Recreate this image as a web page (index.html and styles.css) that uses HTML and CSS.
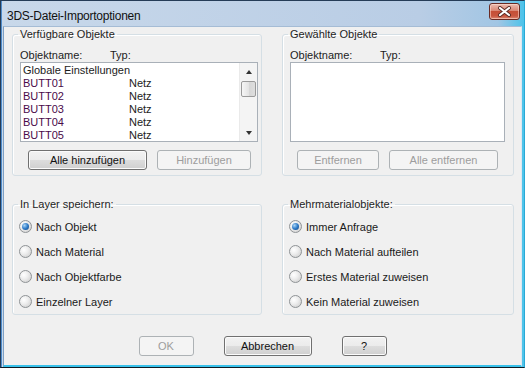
FILE: index.html
```html
<!DOCTYPE html>
<html lang="de">
<head>
    <meta charset="UTF-8">
    <title>3DS-Datei-Importoptionen</title>
    <link rel="stylesheet" href="styles.css">
</head>
<body>
    <div class="window">
        <div class="titlebar">
            <span class="title">3DS-Datei-Importoptionen</span>
            <button class="close" aria-label="Schließen">
                <svg width="15" height="11" viewBox="0 0 15 11">
                    <path d="M3 2 L12 9 M12 2 L3 9" stroke="#5a2a24" stroke-width="4" stroke-linecap="round"/>
                    <path d="M3 2 L12 9 M12 2 L3 9" stroke="#ffffff" stroke-width="2.2" stroke-linecap="round"/>
                </svg>
            </button>
        </div>

        <div class="client">
            <div class="groups">
                <!-- available objects -->
                <fieldset class="group group-left">
                    <legend>Verfügbare Objekte</legend>
                    <div class="cols">
                        <span class="col-name">Objektname:</span>
                        <span>Typ:</span>
                    </div>
                    <div class="listbox list-left">
                        <ul class="items">
                            <li><span class="name">Globale Einstellungen</span></li>
                            <li><span class="name obj">BUTT01</span><span>Netz</span></li>
                            <li><span class="name obj">BUTT02</span><span>Netz</span></li>
                            <li><span class="name obj">BUTT03</span><span>Netz</span></li>
                            <li><span class="name obj">BUTT04</span><span>Netz</span></li>
                            <li><span class="name obj">BUTT05</span><span>Netz</span></li>
                        </ul>
                        <div class="scrollbar">
                            <span class="arrow"><span class="tri up"></span></span>
                            <span class="thumb"></span>
                            <span class="track"></span>
                            <span class="arrow"><span class="tri down"></span></span>
                        </div>
                    </div>
                    <div class="actions">
                        <button class="btn btn-add-all">Alle hinzufügen</button>
                        <button class="btn btn-add" disabled>Hinzufügen</button>
                    </div>
                </fieldset>

                <!-- chosen objects -->
                <fieldset class="group group-right">
                    <legend>Gewählte Objekte</legend>
                    <div class="cols">
                        <span class="col-name">Objektname:</span>
                        <span>Typ:</span>
                    </div>
                    <div class="listbox list-right"></div>
                    <div class="actions">
                        <button class="btn btn-remove" disabled>Entfernen</button>
                        <button class="btn btn-remove-all" disabled>Alle entfernen</button>
                    </div>
                </fieldset>

                <fieldset class="group radios">
                    <legend>In Layer speichern:</legend>
                    <label class="radio-row"><span class="radio checked"></span>Nach Objekt</label>
                    <label class="radio-row"><span class="radio"></span>Nach Material</label>
                    <label class="radio-row"><span class="radio"></span>Nach Objektfarbe</label>
                    <label class="radio-row"><span class="radio"></span>Einzelner Layer</label>
                </fieldset>

                <fieldset class="group radios">
                    <legend>Mehrmaterialobjekte:</legend>
                    <label class="radio-row"><span class="radio checked"></span>Immer Anfrage</label>
                    <label class="radio-row"><span class="radio"></span>Nach Material aufteilen</label>
                    <label class="radio-row"><span class="radio"></span>Erstes Material zuweisen</label>
                    <label class="radio-row"><span class="radio"></span>Kein Material zuweisen</label>
                </fieldset>
            </div>

            <div class="footer">
                <button class="btn btn-ok" disabled>OK</button>
                <button class="btn btn-cancel">Abbrechen</button>
                <button class="btn btn-help">?</button>
            </div>
        </div>
    </div>
</body>
</html>
```

FILE: styles.css
```css
body {
    margin: 0;
    font-family: "Liberation Sans", Arial, sans-serif;
    font-size: 11px;
    color: #1c1c1c;
}
.window {
    width: 525px;
    height: 368px;
    box-sizing: border-box;
    border: 1px solid #253c57;
    border-right-color: #2aa9d6;
    border-bottom-color: #0e1a22;
    display: flex;
    flex-direction: column;
    background: linear-gradient(to right, #4e8ccb 0, #4e8ccb 1px, #c8d8ea 1px, #b9cde5 80%, #a2c6e4 95%, #4cc3ea 100%);
}
.titlebar {
    height: 25px;
    display: flex;
    align-items: flex-start;
    justify-content: space-between;
    padding: 0 4px 0 6px;
}
.title {
    margin-top: 8px;
    font-size: 12px;
    line-height: 14px;
    letter-spacing: -0.25px;
    color: #111;
}
.close {
    margin-top: 2px;
    width: 31px;
    height: 17px;
    padding: 0;
    border: 1px solid #6a2b24;
    border-radius: 3px;
    background: linear-gradient(#ecbcb0 0%, #da8774 45%, #c54f37 50%, #c9563e 80%, #dc8a76 100%);
    box-shadow: inset 0 0 0 1px rgba(255, 225, 215, 0.55);
    display: flex;
    align-items: center;
    justify-content: center;
}
.client {
    flex: 1;
    margin: 0 2px;
    box-sizing: border-box;
    background: #f0f0f0;
    border: 1px solid #a5bcd5;
    border-left-color: #7d9fc4;
    border-right-color: #dfe7f0;
    border-bottom: 2px solid #38c1ea;
    padding: 1px 0 0 8px;
    display: flex;
    flex-direction: column;
}
.groups {
    display: grid;
    grid-template-columns: 250px 232px;
    column-gap: 20px;
    row-gap: 22px;
}
.group {
    margin: 0;
    min-width: 0;
    border: 1px solid #d5dfe5;
    border-radius: 3px;
    box-shadow: inset 1px 1px 0 #fff;
}
.group legend {
    padding: 0 2px;
    margin-left: -2px;
    line-height: 13px;
    color: #1e1e1e;
}
.radios legend {
    margin-left: -1px;
}
.group-left,
.group-right {
    padding: 8px 0 5px 7px;
}
.cols {
    display: flex;
    line-height: 13px;
}
.col-name {
    width: 90px;
}
.listbox {
    height: 80px;
    box-sizing: border-box;
    border: 1px solid #a9b0b8;
    background: #fff;
    display: flex;
}
.list-left {
    width: 238px;
}
.list-right {
    width: 215px;
}
.items {
    flex: 1;
    list-style: none;
    margin: 0;
    padding: 1px 0 0 2px;
    overflow: hidden;
}
.items li {
    display: flex;
    line-height: 13px;
    white-space: nowrap;
}
.name {
    width: 106px;
}
.obj {
    color: #4a0a4a;
}
.scrollbar {
    width: 17px;
    display: flex;
    flex-direction: column;
    background: #f4f4f4;
    border-left: 1px solid #eaeaea;
}
.arrow {
    height: 17px;
    display: flex;
    align-items: center;
    justify-content: center;
}
.tri {
    width: 0;
    height: 0;
    border-left: 3.5px solid transparent;
    border-right: 3.5px solid transparent;
}
.tri.up {
    border-bottom: 4px solid #333;
}
.tri.down {
    border-top: 4px solid #333;
}
.thumb {
    height: 16px;
    margin: 1px 1px 0 1px;
    box-sizing: border-box;
    border: 1px solid #9a9a9a;
    border-radius: 2px;
    background: linear-gradient(to right, #f6f6f6, #e4e4e4 50%, #d6d6d6 51%, #dedede);
}
.track {
    flex: 1;
}
.actions {
    display: flex;
    gap: 10px;
    margin-top: 8px;
}
.group-left .actions {
    padding-left: 8px;
}
.group-right .actions {
    padding-left: 7px;
}
.btn {
    height: 20px;
    padding: 0;
    font-family: "Liberation Sans", Arial, sans-serif;
    font-size: 11px;
    color: #111;
    border: 1px solid #707070;
    border-radius: 3px;
    background: linear-gradient(#f2f2f2 0%, #ebebeb 50%, #dddddd 51%, #cfcfcf 100%);
    box-shadow: inset 0 0 0 1px #fbfbfb;
}
.btn:disabled {
    color: #9d9d9d;
    border-color: #adb2b5;
    background: #f4f4f4;
    box-shadow: none;
}
.btn-add-all {
    width: 119px;
}
.btn-add {
    width: 94px;
}
.btn-remove {
    width: 82px;
}
.btn-remove-all {
    width: 109px;
}
.radios {
    padding: 3px 0 0 6px;
}
.radio-row {
    height: 25px;
    display: flex;
    align-items: center;
    gap: 4px;
    color: #1a1a1a;
}
.radio {
    width: 13px;
    height: 13px;
    box-sizing: border-box;
    border-radius: 50%;
    border: 1px solid #8f9396;
    background: radial-gradient(circle at 35% 35%, #ffffff 0%, #eeeeee 40%, #c8c8c8 100%);
    display: flex;
    align-items: center;
    justify-content: center;
}
.radio.checked::after {
    content: "";
    width: 7px;
    height: 7px;
    border-radius: 50%;
    background: radial-gradient(circle at 35% 35%, #a9d4f6 0%, #2f7cc8 50%, #0c3d78 100%);
}
.footer {
    display: flex;
    justify-content: center;
    gap: 30px;
    margin-top: 21px;
    padding-right: 8px;
}
.btn-ok {
    width: 55px;
}
.btn-cancel {
    width: 88px;
}
.btn-help {
    width: 45px;
}
```
